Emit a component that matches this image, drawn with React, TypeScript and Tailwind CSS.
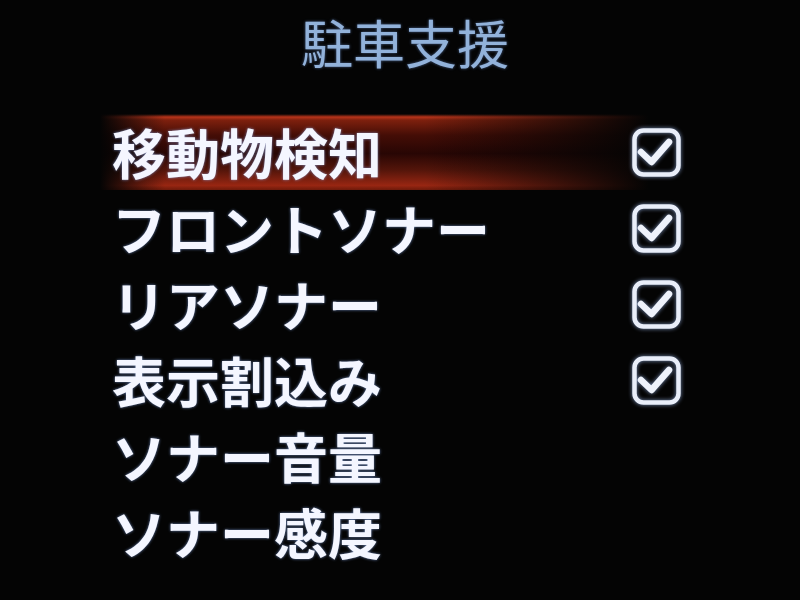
import React from 'react'

type Item = { label: string; checked: boolean | null }

const items: Item[] = [
  { label: '移動物検知', checked: true },
  { label: 'フロントソナー', checked: true },
  { label: 'リアソナー', checked: true },
  { label: '表示割込み', checked: true },
  { label: 'ソナー音量', checked: null },
  { label: 'ソナー感度', checked: null },
]

function CheckBox() {
  return (
    <svg width="49" height="49" viewBox="0 0 49 49" className="shrink-0 drop-shadow-[0_0_2px_rgba(170,200,255,0.7)]" aria-hidden>
      <rect x="2.5" y="2.5" width="44" height="44" rx="9" fill="none" stroke="#e9eef9" strokeWidth="4.5" />
      <path d="M9 24 L19.5 34 L37 14" fill="none" stroke="#eef2fb" strokeWidth="6.5" strokeLinecap="round" strokeLinejoin="round" />
    </svg>
  )
}

export default function App() {
  return (
    <div className="w-[800px] h-[600px] overflow-hidden bg-[#040404] font-['Noto_Sans_CJK_JP','Noto_Sans',sans-serif]">
      <div className="h-[84px] pl-[10px] text-center text-[52px] leading-[84px] text-[#92b2da] [text-shadow:0_0_3px_rgba(120,160,230,0.6)]">
        駐車支援
      </div>
      <div className="pt-[30px] flex flex-col">
        {items.map((it, i) => (
          <div
            key={it.label}
            className={`ml-[100px] w-[590px] h-[76px] flex items-center justify-between pl-[12px] pr-[9px] ${
              i === 0
                ? 'bg-[linear-gradient(to_right,#040404_0%,rgba(4,4,4,0)_11%,rgba(4,4,4,0)_55%,rgba(4,4,4,0.55)_76%,#040404_93%),linear-gradient(to_bottom,rgba(0,0,0,0)_0%,#b8341a_4%,#7e200e_8%,#440d06_28%,#280604_52%,#54150a_74%,#982612_94%,#6e1a0a_100%)]'
                : ''
            }`}
          >
            <span className="text-[54px] font-bold leading-[76px] text-[#f4f6ff] whitespace-nowrap [text-shadow:0_0_3px_rgba(150,185,255,0.7)]">
              {it.label}
            </span>
            {it.checked && <CheckBox />}
          </div>
        ))}
      </div>
    </div>
  )
}
